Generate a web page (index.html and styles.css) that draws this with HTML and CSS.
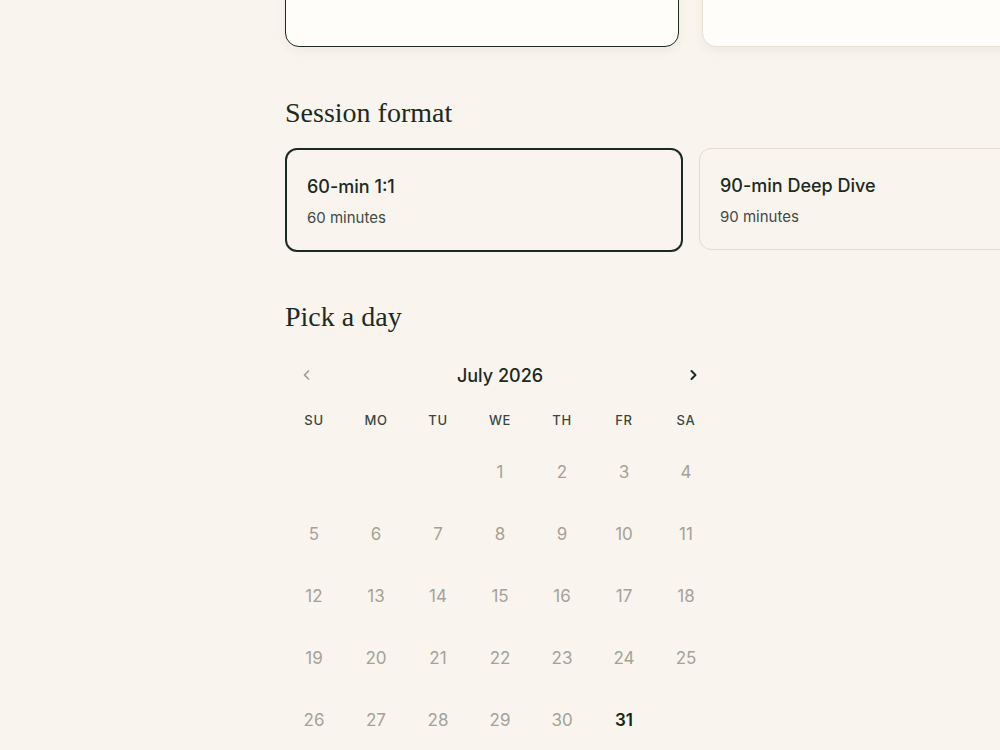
FILE: index.html
```html
<!DOCTYPE html>
<html lang="en">
<head>
    <meta charset="UTF-8">
    <meta name="viewport" content="width=device-width, initial-scale=1.0">
    <title>Book a session</title>
    <link rel="stylesheet" href="styles.css">
</head>
<body>
<div class="page">
    <div class="top-row">
        <div class="top-card selected"></div>
        <div class="top-card"></div>
    </div>

    <h2 class="section-title">Session format</h2>
    <div class="formats">
        <div class="format-card selected">
            <div class="format-name">60-min 1:1</div>
            <div class="format-time">60 minutes</div>
        </div>
        <div class="format-card">
            <div class="format-name">90-min Deep Dive</div>
            <div class="format-time">90 minutes</div>
        </div>
    </div>

    <h2 class="section-title day-title">Pick a day</h2>
    <div class="calendar">
        <div class="cal-head">
            <button class="cal-nav disabled" aria-label="Previous month">
                <svg width="14" height="14" viewBox="0 0 14 14"><path d="M8.5 3 4.5 7l4 4" fill="none" stroke="currentColor" stroke-width="1.7" stroke-linecap="round" stroke-linejoin="round"/></svg>
            </button>
            <div class="cal-month">July 2026</div>
            <button class="cal-nav" aria-label="Next month">
                <svg width="14" height="14" viewBox="0 0 14 14"><path d="M5.5 3 9.5 7l-4 4" fill="none" stroke="currentColor" stroke-width="2" stroke-linecap="round" stroke-linejoin="round"/></svg>
            </button>
        </div>
        <div class="cal-weekdays">
            <span>SU</span><span>MO</span><span>TU</span><span>WE</span><span>TH</span><span>FR</span><span>SA</span>
        </div>
        <div class="cal-days" id="cal-days"></div>
    </div>
</div>

<script>
    const daysEl = document.getElementById('cal-days');
    const firstWeekday = 3; // July 1st 2026 is a Wednesday
    const available = [31];
    let html = '';
    for (let i = 0; i < firstWeekday; i++) {
        html += '<span class="day empty"></span>';
    }
    for (let d = 1; d <= 31; d++) {
        const cls = available.includes(d) ? 'day open' : 'day';
        html += `<span class="${cls}">${d}</span>`;
    }
    daysEl.innerHTML = html;
</script>
</body>
</html>
```

FILE: styles.css
```css
body {
    margin: 0;
    background: #f9f5ee;
    font-family: Inter, "Noto Sans", sans-serif;
    color: #1c2a21;
    overflow: hidden;
}
.page {
    padding-left: 285px;
    width: 900px;
}
.top-row {
    display: flex;
    gap: 23px;
    margin-top: -73px;
}
.top-card {
    width: 392px;
    height: 118px;
    flex-shrink: 0;
    background: #fefdf9;
    border: 1px solid #e6e0d5;
    border-radius: 14px;
    box-shadow: 0 4px 10px rgba(60, 50, 30, 0.06);
}
.top-card.selected {
    border: 1.5px solid #1c2a21;
}
.section-title {
    font-family: "Liberation Serif", serif;
    font-weight: 400;
    font-size: 28px;
    line-height: 32px;
    margin: 50px 0 19px;
    color: #1c2a21;
}
.formats {
    display: grid;
    grid-template-columns: 398px 398px;
    gap: 16px;
}
.format-card {
    border: 1.5px solid #e2dbcf;
    border-radius: 12px;
    padding: 25px 20px 21px;
    height: 54px;
}
.format-card.selected {
    border: 2px solid #1c2a21;
}
.format-name {
    font-size: 18px;
    line-height: 24px;
    font-weight: 500;
}
.format-time {
    font-size: 15px;
    line-height: 20px;
    margin-top: 9px;
    color: #3f4a43;
}
.day-title {
    margin-top: 49px;
    margin-bottom: 22px;
}
.calendar {
    width: 430px;
}
.cal-head {
    display: flex;
    align-items: center;
    justify-content: space-between;
    height: 40px;
}
.cal-nav {
    width: 44px;
    height: 40px;
    border: none;
    background: none;
    color: #1c2a21;
    display: flex;
    align-items: center;
    justify-content: center;
    padding: 0;
    cursor: pointer;
}
.cal-nav.disabled {
    color: #a09f96;
}
.cal-month {
    font-size: 18px;
    font-weight: 500;
}
.cal-weekdays,
.cal-days {
    display: grid;
    grid-template-columns: repeat(7, 44px);
    column-gap: 18px;
    justify-content: center;
}
.cal-weekdays {
    margin-top: 15px;
    height: 20px;
    align-items: center;
}
.cal-weekdays span {
    text-align: center;
    font-size: 13px;
    font-weight: 500;
    letter-spacing: 0.05em;
    color: #3b463f;
}
.cal-days {
    margin-top: 20px;
    grid-auto-rows: 44px;
    row-gap: 18px;
}
.day {
    display: flex;
    align-items: center;
    justify-content: center;
    font-size: 17px;
    color: #a3a298;
}
.day.open {
    color: #16251c;
    font-weight: 600;
}
```
